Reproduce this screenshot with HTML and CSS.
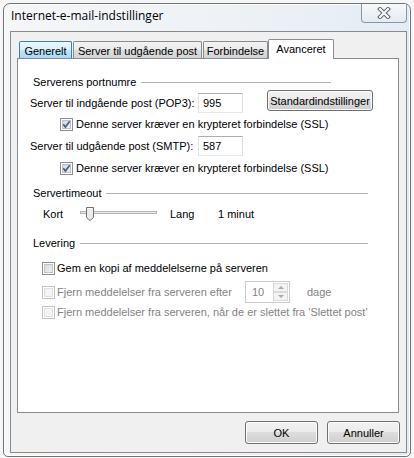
FILE: index.html
```html
<!DOCTYPE html>
<html lang="da">
<head>
  <meta charset="UTF-8">
  <title>Internet-e-mail-indstillinger</title>
  <link rel="stylesheet" href="styles.css">
</head>
<body>
  <div class="window">
    <div class="titlebar">
      <span class="title">Internet-e-mail-indstillinger</span>
      <span class="close">
        <svg width="14" height="12" viewBox="0 0 14 12">
          <path d="M3 2 L11 10 M11 2 L3 10" stroke="#5c6470" stroke-width="4" stroke-linecap="square" fill="none"/>
          <path d="M3 2 L11 10 M11 2 L3 10" stroke="#fff" stroke-width="2" stroke-linecap="square" fill="none"/>
        </svg>
      </span>
    </div>

    <div class="client">
      <div class="tabs">
        <div class="tab hover t-gen">Generelt</div>
        <div class="tab t-out">Server til udgående post</div>
        <div class="tab t-con">Forbindelse</div>
        <div class="tab active t-adv">Avanceret</div>
      </div>

      <div class="panel">
        <!-- Serverens portnumre -->
        <div class="group-head short"><span>Serverens portnumre</span><i></i></div>
        <div class="row port">
          <span class="label">Server til indgående post (POP3):</span>
          <span class="field">995</span>
          <span class="btn std">Standardindstillinger</span>
        </div>
        <div class="row check ssl">
          <span class="cb"><svg viewBox="0 0 11 11"><path d="M2.3 5.3 L4.4 8 L8.7 2.2"/></svg></span>
          <span>Denne server kræver en krypteret forbindelse (SSL)</span>
        </div>
        <div class="row port smtp">
          <span class="label">Server til udgående post (SMTP):</span>
          <span class="field">587</span>
        </div>
        <div class="row check ssl">
          <span class="cb"><svg viewBox="0 0 11 11"><path d="M2.3 5.3 L4.4 8 L8.7 2.2"/></svg></span>
          <span>Denne server kræver en krypteret forbindelse (SSL)</span>
        </div>

        <!-- Servertimeout -->
        <div class="group-head long timeout"><span>Servertimeout</span><i></i></div>
        <div class="row slider-row">
          <span class="s-kort">Kort</span>
          <svg class="slider" width="77" height="16" viewBox="0 0 77 16">
            <rect x="0.5" y="5.5" width="76" height="2" fill="#e7eaea" stroke="#b4b4b4"/>
            <path d="M6.5 1.5 h7 v10 l-3.5 3 l-3.5 -3 z" fill="#ececec" stroke="#707070"/>
            <path d="M7.5 2.5 h5" stroke="#fff"/>
          </svg>
          <span class="s-lang">Lang</span>
          <span>1 minut</span>
        </div>

        <!-- Levering -->
        <div class="group-head long delivery"><span>Levering</span><i></i></div>
        <div class="row check keep">
          <span class="cb"></span>
          <span>Gem en kopi af meddelelserne på serveren</span>
        </div>
        <div class="row check keep off after">
          <span class="cb"></span>
          <span class="after-label">Fjern meddelelser fra serveren efter</span>
          <span class="spin">
            <span class="spin-val">10</span>
            <span class="spin-btns">
              <span class="arrow up"></span>
              <span class="arrow down"></span>
            </span>
          </span>
          <span class="days">dage</span>
        </div>
        <div class="row check keep off deleted">
          <span class="cb"></span>
          <span>Fjern meddelelser fra serveren, når de er slettet fra 'Slettet post'</span>
        </div>
      </div>

      <div class="footer">
        <span class="btn dlg">OK</span>
        <span class="btn dlg">Annuller</span>
      </div>
    </div>
  </div>
</body>
</html>
```

FILE: styles.css
```css
body {
  margin: 0;
  width: 414px;
  height: 458px;
  overflow: hidden;
  background: #f6f6f6;
  font-family: "Liberation Sans", Arial, sans-serif;
  font-size: 11px;
  color: #000;
}

.window {
  box-sizing: border-box;
  width: 408px;
  height: 454px;
  margin: 3px 0 0 3px;
  border: 1px solid #6d747c;
  border-radius: 7px 7px 5px 5px;
  background: linear-gradient(90deg, #f4f6f8 0%, #eef2f6 55%, #e3ecf5 100%);
  box-shadow: inset 0 0 0 1px rgba(255, 255, 255, 0.85);
  display: flex;
  flex-direction: column;
}

.titlebar {
  height: 27px;
  display: flex;
  padding: 0 3px 0 7px;
}
.title {
  font-family: "Open Sans", "Noto Sans", sans-serif;
  font-size: 12px;
  line-height: 24px;
  color: #000;
}
.close {
  margin-left: auto;
  box-sizing: border-box;
  width: 46px;
  height: 19px;
  border: 1px solid #8c96a1;
  border-top: none;
  border-radius: 0 0 4px 4px;
  background: linear-gradient(#f6f8fa, #e6ebf0);
  display: flex;
  align-items: center;
  justify-content: center;
}

.client {
  box-sizing: border-box;
  height: 422px;
  margin: 0 3px 0 6px;
  border: 1px solid #8a8a8a;
  background: #f0f0f0;
}

/* tabs */
.tabs {
  display: flex;
  align-items: flex-end;
  height: 19px;
  margin: 7px 0 0 8px;
}
.tab {
  box-sizing: border-box;
  height: 17px;
  padding-top: 2px;
  line-height: 14px;
  text-align: center;
  border: 1px solid #898c95;
  border-bottom: none;
  border-radius: 2px 2px 0 0;
  background: linear-gradient(#f2f2f2 0%, #ebebeb 50%, #dddddd 50%, #d4d4d4 100%);
}
.tab.hover {
  border-color: #3c7fb1;
  background: linear-gradient(#eaf6fd 0%, #d9f0fc 50%, #bee6fd 50%, #a7d9f5 100%);
}
.tab.active {
  position: relative;
  z-index: 1;
  height: 20px;
  margin-bottom: -1px;
  padding-top: 2px;
  background: #fff;
}
.t-gen { width: 53px; margin-right: 1px; }
.t-out { width: 129px; margin-right: 1px; }
.t-con { width: 65px; }
.t-adv { width: 66px; }

.panel {
  box-sizing: border-box;
  height: 355px;
  margin: 0 7px 0 6px;
  border: 1px solid #898c95;
  background: #fff;
  padding-top: 16px;
}

/* group headers */
.group-head {
  display: flex;
  align-items: center;
  height: 14px;
  margin-left: 15px;
}
.group-head i {
  flex: 1;
  margin-left: 5px;
  border-top: 1px solid #b2b2b2;
}
.group-head.short { width: 298px; }
.group-head.long { width: 335px; }
.timeout { margin-top: 11px; }
.delivery { margin-top: 14px; }

.row {
  display: flex;
  align-items: center;
}

.port {
  height: 20px;
  margin-top: 4px;
  padding-left: 12px;
}
.port.smtp { margin-top: 5px; }
.label { width: 168px; }
.field {
  box-sizing: border-box;
  width: 45px;
  height: 20px;
  padding-left: 4px;
  line-height: 18px;
  background: #fff;
  border: 1px solid;
  border-color: #abadb3 #dbdfe6 #e3e9ef #e2e3ea;
}

.btn {
  box-sizing: border-box;
  display: flex;
  align-items: center;
  justify-content: center;
  border: 1px solid #707070;
  border-radius: 3px;
  background: linear-gradient(#f2f2f2 0%, #ebebeb 50%, #dddddd 50%, #cfcfcf 100%);
  box-shadow: inset 0 0 0 1px #fbfbfb;
}
.btn.std {
  width: 106px;
  height: 21px;
  margin: -3px 0 0 24px;
  align-self: flex-start;
}

/* checkboxes */
.check { height: 14px; }
.ssl {
  margin-top: 4px;
  padding-left: 42px;
}
.ssl + .smtp { margin-top: 5px; }
.smtp + .ssl { margin-top: 5px; }
.cb {
  flex: none;
  box-sizing: border-box;
  width: 13px;
  height: 13px;
  margin-right: 3px;
  border: 1px solid #8e8f8f;
  background: linear-gradient(135deg, #cdd1d7, #f6f6f6);
  box-shadow: inset 0 0 0 1px #fff, inset 0 0 0 2px #bfc4ca;
}
.cb svg {
  display: block;
  width: 11px;
  height: 11px;
}
.cb path {
  fill: none;
  stroke: #4a5d8c;
  stroke-width: 1.7;
}

.keep {
  padding-left: 24px;
  margin-top: 11px;
}
.keep .cb { margin-right: 2px; }
.keep.after {
  height: 22px;
  margin-top: 6px;
}
.keep.deleted { margin-top: 2px; }
.off { color: #838383; }
.off .cb {
  border-color: #c4c4c4;
  background: #f4f4f4;
  box-shadow: inset 0 0 0 1px #fff, inset 0 0 0 2px #e1e1e1;
}
.after-label { width: 188px; }

.spin {
  box-sizing: border-box;
  display: flex;
  width: 45px;
  height: 22px;
  border: 1px solid #c9cbcf;
  background: #fff;
}
.spin-val {
  flex: 1;
  padding-left: 6px;
  line-height: 20px;
}
.spin-btns {
  display: flex;
  flex-direction: column;
  width: 15px;
  margin: 1px 1px 1px 0;
}
.arrow {
  flex: 1;
  box-sizing: border-box;
  border: 1px solid #d9d9d9;
  background: #f3f3f3;
  display: flex;
  align-items: center;
  justify-content: center;
}
.arrow::before {
  content: "";
  border-left: 3px solid transparent;
  border-right: 3px solid transparent;
}
.arrow.up::before { border-bottom: 3px solid #a8a8a8; }
.arrow.down::before { border-top: 3px solid #a8a8a8; }
.days { margin-left: 17px; }

/* slider */
.slider-row {
  height: 16px;
  margin-top: 6px;
  padding-left: 25px;
}
.s-kort { width: 37px; }
.slider { display: block; }
.s-lang {
  width: 48px;
  margin-left: 13px;
}

.footer {
  display: flex;
  justify-content: flex-end;
  gap: 9px;
  margin-top: 8px;
  padding-right: 6px;
}
.btn.dlg {
  width: 73px;
  height: 23px;
}
```
